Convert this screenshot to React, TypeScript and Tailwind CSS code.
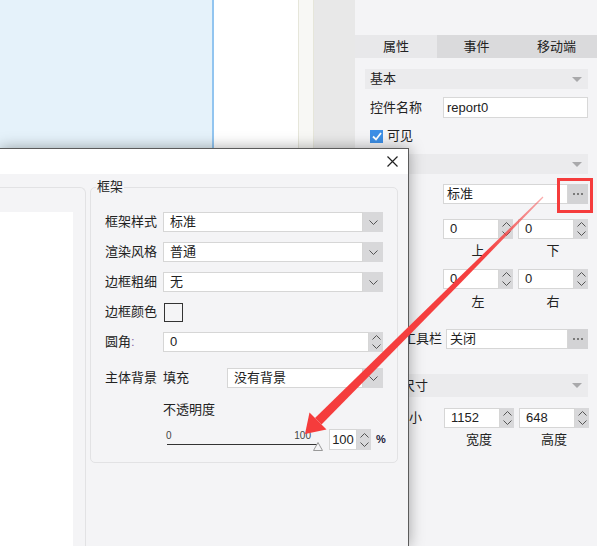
// Report widget properties panel with the frame settings dialog open

import React from 'react'

function ChevronDown() {
  return (
    <svg width="9" height="5" viewBox="0 0 9 5">
      <path d="M0.5 0.5 L4.5 4.5 L8.5 0.5" fill="none" stroke="#555" strokeWidth="1" />
    </svg>
  )
}

function ChevronUp() {
  return (
    <svg width="9" height="5" viewBox="0 0 9 5">
      <path d="M0.5 4.5 L4.5 0.5 L8.5 4.5" fill="none" stroke="#555" strokeWidth="1" />
    </svg>
  )
}

// up/down stepper on the right of a number field
function Spinner() {
  return (
    <div className="w-[14px] self-stretch bg-[#d8d8da] flex flex-col items-center justify-center gap-[4px]">
      <ChevronUp />
      <ChevronDown />
    </div>
  )
}

function SpinInput({ value, width }: { value: string; width: string }) {
  return (
    <div className="flex h-[20px]">
      <div className={`${width} h-full bg-white border border-[#d6d6d6] flex items-center pl-[6px]`}>
        {value}
      </div>
      <Spinner />
    </div>
  )
}

function Select({ value, width }: { value: string; width: string }) {
  return (
    <div className={`${width} h-[20px] flex`}>
      <div className="flex-1 h-full bg-white border border-[#d6d6d6] flex items-center pl-[6px]">
        {value}
      </div>
      <div className="w-[20px] h-full bg-[#d8d8da] flex items-center justify-center">
        <ChevronDown />
      </div>
    </div>
  )
}

function SectionHeader({ title, className = '', textClass = '' }: { title: string; className?: string; textClass?: string }) {
  return (
    <div className={`ml-[10px] w-[223px] bg-[#ebebed] flex items-center justify-between pr-[6px] ${className}`}>
      <span className={`pl-[5px] ${textClass}`}>{title}</span>
      <svg width="10" height="5" viewBox="0 0 10 5">
        <path d="M0 0 L10 0 L5 5 Z" fill="#a9a9ab" />
      </svg>
    </div>
  )
}

function DotsButton() {
  return (
    <div className="w-[20px] h-full bg-[#d3d3d5] flex items-center justify-center gap-[2px]">
      <span className="w-[2px] h-[2px] bg-[#7a7a7a]" />
      <span className="w-[2px] h-[2px] bg-[#7a7a7a]" />
      <span className="w-[2px] h-[2px] bg-[#7a7a7a]" />
    </div>
  )
}

function PropertiesPanel() {
  return (
    <div className="w-[242px] h-full bg-[#f4f4f6] flex flex-col text-[13px] text-[#222]">
      <div className="h-[35px] shrink-0" />

      {/* Tabs */}
      <div className="flex h-[23px] shrink-0">
        <div className="w-[82px] bg-[#e8e8ea] flex items-center justify-center">属性</div>
        <div className="w-[79px] bg-[#dadadc] flex items-center justify-center">事件</div>
        <div className="flex-1 bg-[#dadadc] flex items-center justify-center">移动端</div>
      </div>

      <SectionHeader title="基本" className="mt-[11px] h-[20px]" />

      <div className="mt-[8px] h-[21px] flex items-center pl-[15px]">
        <span className="w-[73px]">控件名称</span>
        <div className="w-[145px] h-full bg-white border border-[#d8d8d8] flex items-center pl-[3px]">report0</div>
      </div>

      <div className="mt-[11px] h-[14px] flex items-center pl-[15px] gap-[4px]">
        <span className="w-[13px] h-[13px] bg-[#3d8fe6] flex items-center justify-center">
          <svg width="10" height="9" viewBox="0 0 10 9">
            <path d="M1 4.5 L4 7.5 L9 1" fill="none" stroke="#fff" strokeWidth="1.8" />
          </svg>
        </span>
        <span>可见</span>
      </div>

      <SectionHeader title="样式" className="mt-[11px] h-[20px]" />

      <div className="mt-[10px] h-[20px] flex pl-[88px]">
        <div className="w-[125px] h-full bg-white border border-[#d6d6d6] flex items-center pl-[3px]">标准</div>
        <DotsButton />
      </div>

      <div className="mt-[15px] flex pl-[88px] gap-[5px]">
        <SpinInput value="0" width="w-[56px]" />
        <SpinInput value="0" width="w-[56px]" />
      </div>
      <div className="mt-[5px] h-[14px] flex pl-[88px] gap-[5px] leading-[14px]">
        <span className="w-[70px] text-center">上</span>
        <span className="w-[70px] text-center">下</span>
      </div>

      <div className="mt-[11px] flex pl-[88px] gap-[5px]">
        <SpinInput value="0" width="w-[56px]" />
        <SpinInput value="0" width="w-[56px]" />
      </div>
      <div className="mt-[6px] h-[14px] flex pl-[88px] gap-[5px] leading-[14px]">
        <span className="w-[70px] text-center">左</span>
        <span className="w-[70px] text-center">右</span>
      </div>

      <div className="mt-[20px] h-[20px] flex items-center pl-[15px]">
        <span className="w-[76px] flex justify-end pr-[4px]">显示工具栏</span>
        <div className="w-[122px] h-full bg-white border border-[#d6d6d6] flex items-center pl-[3px]">关闭</div>
        <DotsButton />
      </div>

      <SectionHeader title="画布尺寸" className="mt-[25px] h-[23px]" textClass="pl-[11px]" />

      <div className="mt-[11px] h-[20px] flex items-center pl-[15px]">
        <span className="w-[74px]">画布大小</span>
        <div className="flex gap-[5px]">
          <SpinInput value="1152" width="w-[56px]" />
          <SpinInput value="648" width="w-[56px]" />
        </div>
      </div>
      <div className="mt-[5px] h-[14px] flex pl-[89px] gap-[5px] leading-[14px]">
        <span className="w-[70px] text-center">宽度</span>
        <span className="w-[70px] text-center">高度</span>
      </div>
    </div>
  )
}

function FrameDialog() {
  return (
    <div className="absolute left-0 top-[148px] w-[409px] h-[398px] bg-[#f4f4f6] border-t border-r border-[#5b5b5b] shadow-[0_0_14px_rgba(0,0,0,0.35)] flex flex-col text-[13px] text-[#222]">
      {/* Title bar */}
      <div className="h-[25px] shrink-0 bg-white flex items-center justify-end pr-[10px]">
        <svg width="11" height="11" viewBox="0 0 11 11">
          <path d="M0.5 0.5 L10.5 10.5 M10.5 0.5 L0.5 10.5" stroke="#222" strokeWidth="1.2" />
        </svg>
      </div>

      <div className="flex pt-[13px] flex-1 min-h-0">
        {/* Preview group, clipped on the left */}
        <div className="w-[86px] h-[400px] border-t border-r border-[#e2e2e4] rounded-tr-[6px] pt-[24px]">
          <div className="w-[73px] h-full bg-white" />
        </div>

        {/* 框架 group */}
        <div className="relative ml-[4px] w-[308px] h-[276px] border border-[#e2e2e4] rounded-[5px] pt-[24px] pl-[14px]">
          <span className="absolute -top-[9px] left-[5px] px-[1px] bg-[#f4f4f6] leading-[16px]">框架</span>

          <div className="h-[20px] flex items-center">
            <span className="w-[58px]">框架样式</span>
            <Select value="标准" width="w-[220px]" />
          </div>
          <div className="mt-[10px] h-[20px] flex items-center">
            <span className="w-[58px]">渲染风格</span>
            <Select value="普通" width="w-[220px]" />
          </div>
          <div className="mt-[10px] h-[20px] flex items-center">
            <span className="w-[58px]">边框粗细</span>
            <Select value="无" width="w-[220px]" />
          </div>
          <div className="mt-[10px] h-[20px] flex items-center">
            <span className="w-[58px]">边框颜色</span>
            <span className="ml-[1px] w-[19px] h-[19px] border border-[#333]" />
          </div>
          <div className="mt-[10px] h-[20px] flex items-center">
            <span className="w-[58px]">
              圆角<span className="text-[#8a6aa8]">:</span>
            </span>
            <SpinInput value="0" width="w-[206px]" />
          </div>
          <div className="mt-[16px] h-[20px] flex items-center">
            <span className="w-[58px]">主体背景</span>
            <span className="w-[64px]">填充</span>
            <Select value="没有背景" width="w-[156px]" />
          </div>
          <div className="mt-[14px] h-[16px] flex items-center pl-[58px]">不透明度</div>

          {/* Opacity slider */}
          <div className="mt-[11px] flex items-start pl-[58px]">
            <div className="relative w-[160px] h-[21px] flex flex-col pt-[1px]">
              <div className="flex justify-between pl-[3px] pr-[12px] text-[10px] leading-[12px] text-[#444]">
                <span>0</span>
                <span>100</span>
              </div>
              <div className="mt-[2px] ml-[4px] mr-[5px] h-[1px] bg-[#333]" />
              <svg className="absolute right-0 top-[13px]" width="10" height="9" viewBox="0 0 10 9">
                <path d="M5 0.5 L9.5 8.5 L0.5 8.5 Z" fill="#f4f4f6" stroke="#999" strokeWidth="1" />
              </svg>
            </div>
            <div className="ml-[6px] flex h-[21px]">
              <div className="w-[28px] h-full bg-white border border-[#d6d6d6] flex items-center justify-center">100</div>
              <Spinner />
            </div>
            <span className="ml-[5px] self-center text-[11px] font-semibold text-[#1a1a3a]">%</span>
          </div>
        </div>
      </div>
    </div>
  )
}

export default function App() {
  return (
    <div className="relative w-[597px] h-[546px] overflow-hidden font-['Liberation_Sans','Noto_Sans_CJK_SC',sans-serif]">
      {/* Editor behind the dialog */}
      <div className="flex h-full">
        <div className="w-[212px] h-full bg-[#e5f2fa] shrink-0" />
        <div className="w-[2px] h-full bg-[#92c5f0] shrink-0" />
        <div className="w-[84px] h-full bg-white shrink-0" />
        <div className="w-[16px] h-full bg-[#f8f8f5] border-x border-[#e6e6da] shrink-0" />
        <div className="w-[41px] h-full bg-[#e8e8e8] shrink-0" />
        <PropertiesPanel />
      </div>

      <FrameDialog />

      {/* Annotation: red box and arrow */}
      <svg className="absolute inset-0 pointer-events-none" width="597" height="546" viewBox="0 0 597 546">
        <defs>
          <linearGradient id="shaft" x1="543" y1="197" x2="318" y2="421" gradientUnits="userSpaceOnUse">
            <stop offset="0" stopColor="#f54848" stopOpacity="0.45" />
            <stop offset="0.25" stopColor="#f54040" stopOpacity="1" />
            <stop offset="1" stopColor="#f53c3c" stopOpacity="1" />
          </linearGradient>
        </defs>
        <rect x="558.5" y="179.5" width="33" height="32" fill="none" stroke="#f53c3c" strokeWidth="3" />
        <polygon
          points="542.6,196.6 458.2,278.2 315,418 321.5,424.5 461.8,281.8 543.4,197.4"
          fill="url(#shaft)"
        />
        <polygon points="305,434 309.5,412.5 326.5,429.5" fill="#f53c3c" />
      </svg>
    </div>
  )
}
